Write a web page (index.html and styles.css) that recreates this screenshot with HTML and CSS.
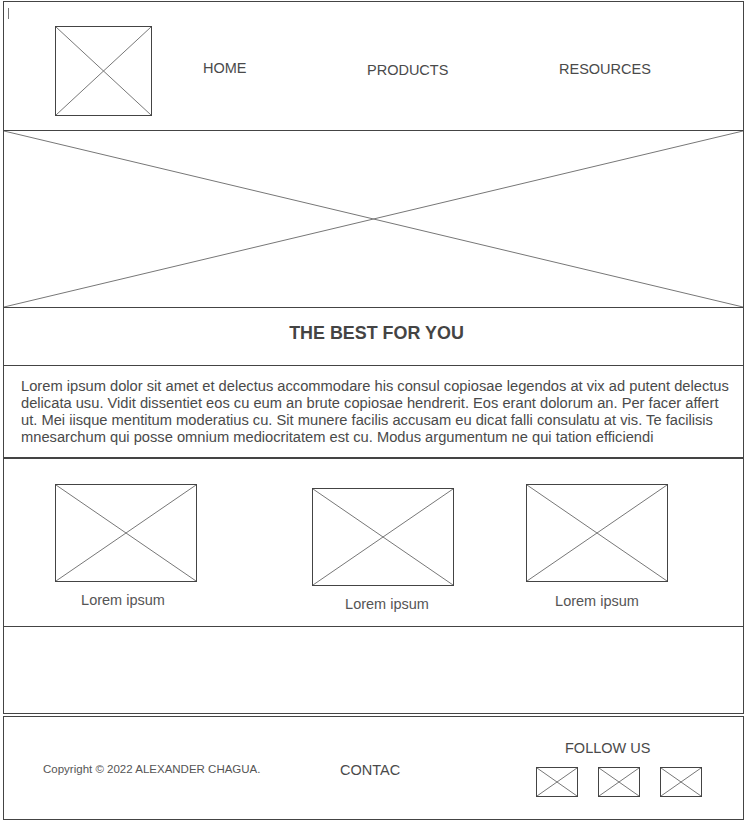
FILE: index.html
```html
<!DOCTYPE html>
<html lang="en">
<head>
  <meta charset="UTF-8">
  <meta name="viewport" content="width=device-width, initial-scale=1.0">
  <title>The Best For You</title>
  <link rel="stylesheet" href="styles.css">
</head>
<body>
  <div class="page">
    <header class="site-header">
      <span class="caret"></span>
      <div class="ph logo">
        <svg class="x" viewBox="0 0 100 100" preserveAspectRatio="none"><path d="M0 0L100 100M100 0L0 100"/></svg>
      </div>
      <a class="nav-link nav-link--home" href="#">HOME</a>
      <a class="nav-link nav-link--low" href="#">PRODUCTS</a>
      <a class="nav-link" href="#">RESOURCES</a>
    </header>

    <section class="hero">
      <svg class="x" viewBox="0 0 100 100" preserveAspectRatio="none"><path d="M0 0L100 100M100 0L0 100"/></svg>
    </section>

    <section class="title">
      <h1>THE BEST FOR YOU</h1>
    </section>

    <section class="intro">
      <p>Lorem ipsum dolor sit amet et delectus accommodare his consul copiosae legendos at vix ad putent delectus delicata usu. Vidit dissentiet eos cu eum an brute copiosae hendrerit. Eos erant dolorum an. Per facer affert ut. Mei iisque mentitum moderatius cu. Sit munere facilis accusam eu dicat falli consulatu at vis. Te facilisis mnesarchum qui posse omnium mediocritatem est cu. Modus argumentum ne qui tation efficiendi</p>
    </section>

    <section class="cards">
      <div class="card card--first">
        <div class="ph card-img">
          <svg class="x" viewBox="0 0 100 100" preserveAspectRatio="none"><path d="M0 0L100 100M100 0L0 100"/></svg>
        </div>
        <p class="card-label">Lorem ipsum</p>
      </div>
      <div class="card card--mid">
        <div class="ph card-img">
          <svg class="x" viewBox="0 0 100 100" preserveAspectRatio="none"><path d="M0 0L100 100M100 0L0 100"/></svg>
        </div>
        <p class="card-label">Lorem ipsum</p>
      </div>
      <div class="card card--last">
        <div class="ph card-img">
          <svg class="x" viewBox="0 0 100 100" preserveAspectRatio="none"><path d="M0 0L100 100M100 0L0 100"/></svg>
        </div>
        <p class="card-label">Lorem ipsum</p>
      </div>
    </section>

    <section class="blank"></section>

    <footer class="site-footer">
      <p class="copyright">Copyright © 2022 ALEXANDER CHAGUA.</p>
      <a class="contact" href="#">CONTAC</a>
      <div class="follow">
        <p class="follow-title">FOLLOW US</p>
        <div class="social">
          <div class="ph social-icon">
            <svg class="x" viewBox="0 0 100 100" preserveAspectRatio="none"><path d="M0 0L100 100M100 0L0 100"/></svg>
          </div>
          <div class="ph social-icon">
            <svg class="x" viewBox="0 0 100 100" preserveAspectRatio="none"><path d="M0 0L100 100M100 0L0 100"/></svg>
          </div>
          <div class="ph social-icon">
            <svg class="x" viewBox="0 0 100 100" preserveAspectRatio="none"><path d="M0 0L100 100M100 0L0 100"/></svg>
          </div>
        </div>
      </div>
    </footer>
  </div>
</body>
</html>
```

FILE: styles.css
```css
* {
  box-sizing: border-box;
}

body {
  margin: 0;
  font-family: "Liberation Sans", Arial, sans-serif;
  color: #444;
  background: #fff;
}

a {
  color: inherit;
  text-decoration: none;
}

.page {
  width: 741px;
  margin: 1px 0 0 3px;
}

/* placeholder boxes with a cross */
.ph {
  border: 1px solid #444;
}

.x {
  display: block;
  width: 100%;
  height: 100%;
}

.x path {
  fill: none;
  stroke: #777;
  stroke-width: 1;
  vector-effect: non-scaling-stroke;
}

.site-header,
section,
.site-footer {
  border: 1px solid #444;
  border-top: none;
}

.site-header {
  position: relative;
  height: 130px;
  border-top: 1px solid #444;
  padding: 24px 0 0 51px;
  display: grid;
  grid-template-columns: 148px 164px 192px 1fr;
  align-items: start;
}

.caret {
  position: absolute;
  top: 6px;
  left: 4px;
  width: 1px;
  height: 11px;
  background: #777;
}

.logo {
  width: 97px;
  height: 90px;
}

.nav-link {
  font-size: 14.5px;
  line-height: 17px;
  color: #4a4a4a;
  margin-top: 35px;
}

.nav-link--home {
  margin-top: 34px;
}

.nav-link--low {
  margin-top: 36px;
}

.hero {
  height: 177px;
}

.title {
  height: 58px;
  padding: 15px 0 0 6px;
}

.title h1 {
  margin: 0;
  text-align: center;
  font-size: 17.9px;
  line-height: 20px;
  font-weight: bold;
  color: #444;
}

.intro {
  height: 93px;
  padding: 12px 12px 0 17px;
  border-bottom-width: 2px;
}

.intro p {
  margin: 0;
  font-size: 14.7px;
  line-height: 17px;
  color: #4a4a4a;
}

.cards {
  height: 168px;
  padding: 25px 0 0 51px;
  display: flex;
  align-items: flex-start;
}

.card {
  width: 142px;
}

.card--mid {
  margin: 4px 0 0 115px;
}

.card--last {
  margin-left: 72px;
}

.card-img {
  height: 98px;
}

.card-label {
  margin: 10px 0 0;
  text-align: center;
  font-size: 14.5px;
  line-height: 17px;
  color: #555;
}

.card--first .card-label {
  padding-right: 6px;
}

.card--mid .card-label {
  padding-left: 8px;
}

.card--last .card-label {
  margin-top: 11px;
}

.blank {
  height: 87px;
}

.site-footer {
  margin-top: 2px;
  height: 104px;
  border-top: 1px solid #444;
  padding-left: 39px;
  display: grid;
  grid-template-columns: 297px 196px auto;
  align-items: center;
}

.copyright {
  margin: 2px 0 0;
  font-size: 11.5px;
  color: #555;
}

.contact {
  font-size: 14.5px;
  line-height: 17px;
  margin-top: 5px;
  color: #4a4a4a;
}

.follow {
  width: 166px;
}

.follow-title {
  margin: 0 0 10px 29px;
  font-size: 14.5px;
  line-height: 17px;
  color: #4a4a4a;
}

.social {
  display: flex;
  gap: 20px;
}

.social-icon {
  width: 42px;
  height: 30px;
}
```
